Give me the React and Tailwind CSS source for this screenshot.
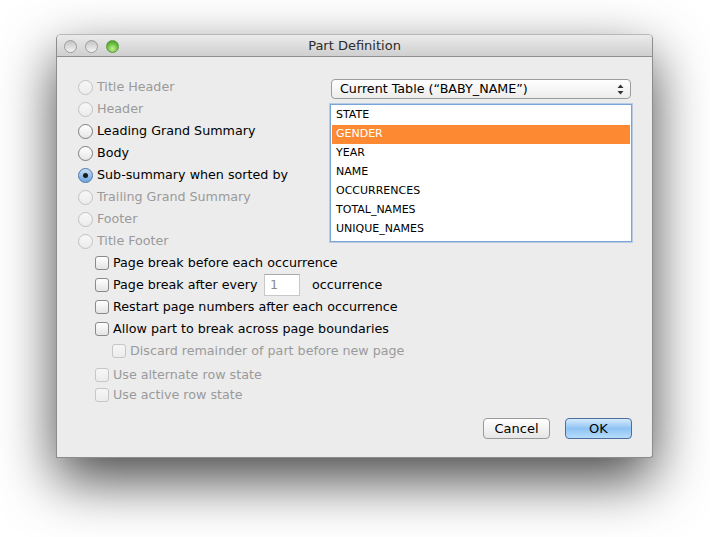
import React, { useState } from 'react';

const FONT = "font-['Lucida_Grande','DejaVu_Sans',sans-serif]";

const parts = [
  { label: 'Title Header', enabled: false },
  { label: 'Header', enabled: false },
  { label: 'Leading Grand Summary', enabled: true },
  { label: 'Body', enabled: true },
  { label: 'Sub-summary when sorted by', enabled: true },
  { label: 'Trailing Grand Summary', enabled: false },
  { label: 'Footer', enabled: false },
  { label: 'Title Footer', enabled: false },
];

const fields = ['STATE', 'GENDER', 'YEAR', 'NAME', 'OCCURRENCES', 'TOTAL_NAMES', 'UNIQUE_NAMES'];

function Radio({ checked, enabled }) {
  if (checked) {
    return (
      <span className="w-[15px] h-[15px] rounded-full border border-[#4f76a8] bg-gradient-to-b from-[#c4ddf6] to-[#6ea7e3] flex items-center justify-center">
        <span className="w-[5px] h-[5px] rounded-full bg-[#1b1b1b]" />
      </span>
    );
  }
  return (
    <span
      className={
        enabled
          ? 'w-[15px] h-[15px] rounded-full border border-[#7e7e7e] bg-gradient-to-b from-white to-[#e6e6e6]'
          : 'w-[15px] h-[15px] rounded-full border border-[#c2c2c2] bg-gradient-to-b from-[#f7f7f7] to-[#ececec]'
      }
    />
  );
}

function Checkbox({ enabled = true }) {
  return (
    <span
      className={
        enabled
          ? 'w-[14px] h-[14px] rounded-[3px] border border-[#8a8a8a] bg-gradient-to-b from-white to-[#e4e4e4] shrink-0'
          : 'w-[14px] h-[14px] rounded-[3px] border border-[#c6c6c6] bg-gradient-to-b from-[#f6f6f6] to-[#ececec] shrink-0'
      }
    />
  );
}

function CheckRow({ label, enabled = true, indent = false, className = 'h-[22px]', labelClass = '', children }) {
  return (
    <div className={`flex items-center whitespace-nowrap ${className} ${indent ? 'pl-[17px]' : ''}`}>
      <Checkbox enabled={enabled} />
      <span className={`ml-[4px] ${labelClass} ${enabled ? 'text-black' : 'text-[#9a9a9a]'}`}>{label}</span>
      {children}
    </div>
  );
}

export default function App() {
  const [part, setPart] = useState(4);
  const [field, setField] = useState(1);

  return (
    <div className={`w-[710px] h-[537px] bg-white pl-[56px] pt-[34px] ${FONT} text-[12.7px]`}>
      <div className="w-[597px] h-[424px] flex flex-col rounded-t-[5px] rounded-br-[3px] bg-[#ececec] border border-[#8c8c8c] border-t-[#b8b8b8] shadow-[0_22px_55px_rgba(0,0,0,0.72)] overflow-hidden">
        {/* title bar */}
        <div className="h-[22px] shrink-0 flex items-center relative bg-gradient-to-b from-[#ebebeb] to-[#cfcfcf] border-b border-[#8f8f8f]">
          <div className="flex items-center gap-[8px] pl-[7px] pt-[1px]">
            <span className="w-[13px] h-[13px] rounded-full border border-[#9c9c9c] bg-gradient-to-b from-[#c4c4c4] to-[#f4f4f4]" />
            <span className="w-[13px] h-[13px] rounded-full border border-[#9c9c9c] bg-gradient-to-b from-[#c4c4c4] to-[#f4f4f4]" />
            <span className="w-[13px] h-[13px] rounded-full border border-[#5f9a3c] bg-[radial-gradient(circle_at_50%_70%,#c4f28f,#63b83b_60%,#3f8a24)]" />
          </div>
          <div className="absolute inset-0 pt-[1px] flex items-center justify-center text-[13px] text-[#2b2b2b] pointer-events-none">
            Part Definition
          </div>
        </div>

        {/* body */}
        <div className="flex flex-col flex-1">
          <div className="flex pt-[19px]">
            <div className="flex flex-col pl-[21px]">
              {parts.map((p, i) => (
                <div
                  key={p.label}
                  className="h-[22px] flex items-center cursor-default"
                  onClick={() => p.enabled && setPart(i)}
                >
                  <Radio checked={part === i} enabled={p.enabled} />
                  <span className={`ml-[4px] ${p.enabled ? 'text-black' : 'text-[#9a9a9a]'}`}>{p.label}</span>
                </div>
              ))}
            </div>

            <div className="ml-auto mr-[20px] w-[302px] pt-[3px] flex flex-col">
              <div className="mx-[1px] h-[20px] rounded-[4px] border border-[#9c9c9c] bg-gradient-to-b from-white to-[#ececec] flex items-center pl-[8px] pr-[6px]">
                <span className="flex-1 text-black">Current Table (“BABY_NAME”)</span>
                <svg width="7" height="11" viewBox="0 0 7 11">
                  <path d="M3.5 0.5 L6.5 4 L0.5 4 Z" fill="#333" />
                  <path d="M3.5 10.5 L6.5 7 L0.5 7 Z" fill="#333" />
                </svg>
              </div>
              <div className="mt-[5px] h-[138px] border border-[#7aa5d8] bg-white shadow-[0_0_0_1px_rgba(122,165,216,0.45)] p-[1px] text-[11px]">
                {fields.map((f, i) => (
                  <div
                    key={f}
                    onClick={() => setField(i)}
                    className={`h-[19px] flex items-center pl-[4px] ${field === i ? 'bg-[#fd8a33] text-white' : 'text-black'}`}
                  >
                    {f}
                  </div>
                ))}
              </div>
            </div>
          </div>

          {/* options */}
          <div className="flex flex-col pl-[38px]">
            <CheckRow label="Page break before each occurrence" />
            <CheckRow label="Page break after every" labelClass="w-[138px] shrink-0">
              <span className="ml-[13px] w-[36px] h-[22px] shrink-0 border border-[#c8c8c8] border-t-[#a8a8a8] bg-white text-[#8a8a8a] flex items-center pl-[5px]">1</span>
              <span className="ml-[12px]">occurrence</span>
            </CheckRow>
            <CheckRow label="Restart page numbers after each occurrence" />
            <CheckRow label="Allow part to break across page boundaries" />
            <CheckRow label="Discard remainder of part before new page" enabled={false} indent />
            <CheckRow label="Use alternate row state" enabled={false} className="h-[20px] mt-[3px]" />
            <CheckRow label="Use active row state" enabled={false} className="h-[20px]" />
          </div>

          {/* buttons */}
          <div className="flex justify-end gap-[15px] pr-[20px] mt-[13px]">
            <button className="w-[67px] h-[21px] rounded-[4px] border border-[#9a9a9a] bg-gradient-to-b from-white to-[#e6e6e6] text-black text-[13px] leading-none">
              Cancel
            </button>
            <button className="w-[67px] h-[21px] rounded-[4px] border border-[#4c6f9e] bg-gradient-to-b from-[#d6ebfd] via-[#8ec3f4] to-[#b6dcfb] text-black text-[13px] leading-none">
              OK
            </button>
          </div>
        </div>
      </div>
    </div>
  );
}
